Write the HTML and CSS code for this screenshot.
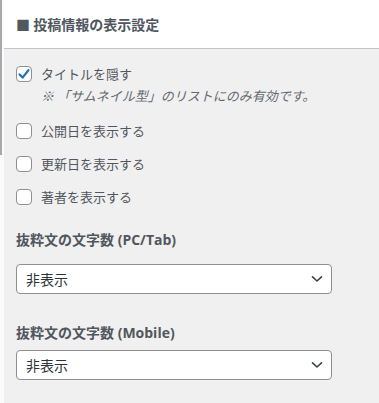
FILE: index.html
```html
<!DOCTYPE html>
<html lang="ja">
<head>
<meta charset="utf-8">
<link rel="stylesheet" href="styles.css">
</head>
<body>
<div class="frame">
  <div class="edge"><div class="edge-line"></div></div>
  <div class="panel">
    <div class="panel-head"><span class="sq">■</span> 投稿情報の表示設定</div>
    <div class="panel-body">
      <div class="check-row first">
        <span class="box checked">
          <svg viewBox="0 0 16 16" width="16" height="16"><path d="M3.6 8.4 L6.6 11.6 L12.4 4.2" fill="none" stroke="#2271b1" stroke-width="2.2" stroke-linecap="round" stroke-linejoin="round"/></svg>
        </span>
        <div class="check-text">
          <div class="label">タイトルを隠す</div>
          <div class="note">※ 「サムネイル型」のリストにのみ有効です。</div>
        </div>
      </div>
      <div class="check-row"><span class="box"></span><div class="label">公開日を表示する</div></div>
      <div class="check-row"><span class="box"></span><div class="label">更新日を表示する</div></div>
      <div class="check-row"><span class="box"></span><div class="label">著者を表示する</div></div>

      <div class="field-title t1">抜粋文の文字数 (PC/Tab)</div>
      <div class="select">
        <span>非表示</span>
        <svg viewBox="0 0 12 8" width="12" height="8"><path d="M1.5 1.8 L6 6 L10.5 1.8" fill="none" stroke="#3c434a" stroke-width="1.6" stroke-linecap="round" stroke-linejoin="round"/></svg>
      </div>
      <div class="field-title t2">抜粋文の文字数 (Mobile)</div>
      <div class="select">
        <span>非表示</span>
        <svg viewBox="0 0 12 8" width="12" height="8"><path d="M1.5 1.8 L6 6 L10.5 1.8" fill="none" stroke="#3c434a" stroke-width="1.6" stroke-linecap="round" stroke-linejoin="round"/></svg>
      </div>
    </div>
  </div>
</div>
</body>
</html>
```
FILE: styles.css
```css
html, body {
  margin: 0;
  padding: 0;
  background: #ffffff;
}
body {
  font-family: "Open Sans", "Noto Sans CJK JP", sans-serif;
  color: #50575e;
  width: 379px;
  height: 403px;
  overflow: hidden;
}
.frame {
  display: flex;
  height: 403px;
}
.edge {
  width: 4px;
  flex: none;
  background: #fbfbfb;
}
.edge-line {
  width: 2px;
  height: 155px;
  background: #a7aaad;
}
.panel {
  flex: 1;
  display: flex;
  flex-direction: column;
}
.panel-head {
  height: 49px;
  box-sizing: border-box;
  border-bottom: 1px solid #c3c4c7;
  background: #ffffff;
  font-family: "Noto Sans CJK JP", sans-serif;
  font-weight: 700;
  font-size: 14px;
  line-height: 48px;
  padding-left: 12px;
  color: #50575e;
}
.sq {
  font-size: 14px;
}
.panel-body {
  flex: 1;
  background: #f0f0f0;
  padding: 0 12px;
}
.check-row {
  display: flex;
  align-items: flex-start;
  gap: 9px;
  margin-top: 17px;
}
.check-row.first {
  margin-top: 17px;
  margin-bottom: 19px;
}
.box {
  width: 16px;
  height: 16px;
  box-sizing: border-box;
  border: 1px solid #8c8f94;
  border-radius: 4px;
  background: #ffffff;
  flex: none;
  display: flex;
  align-items: center;
  justify-content: center;
}
.box svg {
  display: block;
  margin: -1px;
}
.label {
  font-family: "Noto Sans CJK JP", sans-serif;
  font-size: 13px;
  line-height: 16px;
  color: #50575e;
}
.note {
  font-family: "Noto Sans CJK JP", sans-serif;
  font-size: 13px;
  line-height: 16px;
  margin-top: 6px;
  font-style: italic;
  color: #646970;
}
.field-title {
  font-family: "Open Sans", "Noto Sans CJK JP", sans-serif;
  font-weight: 700;
  font-size: 14px;
  line-height: 18px;
  color: #50575e;
}
.t1 {
  margin-top: 26px;
  margin-bottom: 15px;
}
.t2 {
  margin-top: 30px;
  margin-bottom: 8px;
}
.select {
  width: 316px;
  height: 30px;
  box-sizing: border-box;
  border: 1px solid #8c8f94;
  border-radius: 4px;
  background: #ffffff;
  display: flex;
  align-items: center;
  justify-content: space-between;
  padding: 0 8px 0 9px;
  font-family: "Noto Sans CJK JP", sans-serif;
  font-size: 14px;
  color: #2c3338;
}
.select svg {
  display: block;
}
```
